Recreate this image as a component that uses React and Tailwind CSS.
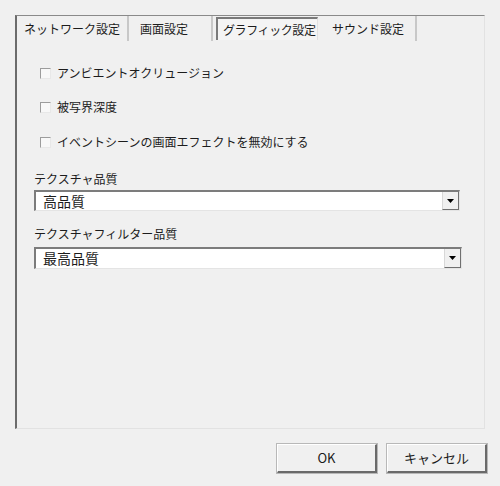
import React from "react";

const font = { fontFamily: '"MS UI Gothic", "Noto Sans CJK JP", sans-serif' };

function Tab({ label, width, pad, selected }) {
  if (selected) {
    return (
      <div
        className={`flex items-center whitespace-nowrap tracking-[-0.4px] h-[23px] mt-[1px] ml-[3px] mr-[2px] pl-[5px] border-l-2 border-t-2 border-[#7a7a7a] border-r border-r-[#e0e0e0] bg-[#f4f4f4] ${width}`}
      >
        {label}
      </div>
    );
  }
  return (
    <div className={`flex items-center whitespace-nowrap h-[25px] border-r-2 border-[#c8c8c8] ${pad} ${width}`}>
      {label}
    </div>
  );
}

function Check({ label, gap }) {
  return (
    <div className={`flex items-center h-[14px] ${gap}`}>
      <span className="w-[11px] h-[11px] border border-[#9c9c9c] border-r-[#e8e8e8] border-b-[#e8e8e8] bg-[#f8f8f8]" />
      <span className="ml-[6px]">{label}</span>
    </div>
  );
}

function Select({ value, width }) {
  return (
    <div className={`flex bg-white border-l-2 border-t-2 border-[#7c7c7c] border-r border-b border-r-[#e4e4e4] border-b-[#e4e4e4] ${width}`}>
      <div className="flex-1 flex items-center pl-[7px] text-[14px]">{value}</div>
      <div className="w-[17px] flex items-center justify-center bg-[#f0f0f0] border-l border-[#d8d8d8] border-r border-b border-r-[#707070] border-b-[#707070]">
        <svg width="7" height="4" viewBox="0 0 7 4">
          <path d="M0 0h7L3.5 4z" fill="#000" />
        </svg>
      </div>
    </div>
  );
}

function Button({ label }) {
  return (
    <button className="w-[100px] h-[29px] flex items-center justify-center bg-[#f0f0f0] border-l border-t border-white border-r-2 border-b-2 border-r-[#6a6a6a] border-b-[#6a6a6a] text-[13px] text-[#1a1a1a] outline outline-1 outline-[#b8b8b8]">
      {label}
    </button>
  );
}

export default function App() {
  return (
    <div className="w-[500px] h-[486px] bg-[#f0f0f0] text-[12px] text-[#1c1c1c] pt-[15px] pl-[15px]" style={font}>
      {/* panel */}
      <div className="w-[470px] h-[414px] border-l-2 border-t border-[#8a8a8a] border-l-[#6c6c6c] border-r border-b border-r-[#e2e2e2] border-b-[#e2e2e2] flex flex-col">
        <div className="flex h-[25px] text-[12px]">
          <Tab label="ネットワーク設定" width="w-[112px]" pad="pl-[7px]" />
          <Tab label="画面設定" width="w-[84px]" pad="pl-[11px]" />
          <Tab label="グラフィック設定" width="w-[102px]" selected />
          <Tab label="サウンド設定" width="w-[97px]" pad="pl-[12px]" />
        </div>

        <div className="pl-[23px] flex flex-col">
          <Check label="アンビエントオクリュージョン" gap="mt-[25px]" />
          <Check label="被写界深度" gap="mt-[20px]" />
          <Check label="イベントシーンの画面エフェクトを無効にする" gap="mt-[21px]" />
        </div>

        <div className="pl-[17px] flex flex-col">
          <div className="mt-[22px] h-[16px] flex items-center">テクスチャ品質</div>
          <div className="mt-[3px] flex h-[21px]">
            <Select value="高品質" width="w-[426px]" />
          </div>
          <div className="mt-[15px] h-[16px] flex items-center">テクスチャフィルター品質</div>
          <div className="mt-[5px] flex h-[22px]">
            <Select value="最高品質" width="w-[428px]" />
          </div>
        </div>
      </div>

      <div className="flex gap-[10px] pl-[262px] mt-[15px]">
        <Button label="OK" />
        <Button label="キャンセル" />
      </div>
    </div>
  );
}
